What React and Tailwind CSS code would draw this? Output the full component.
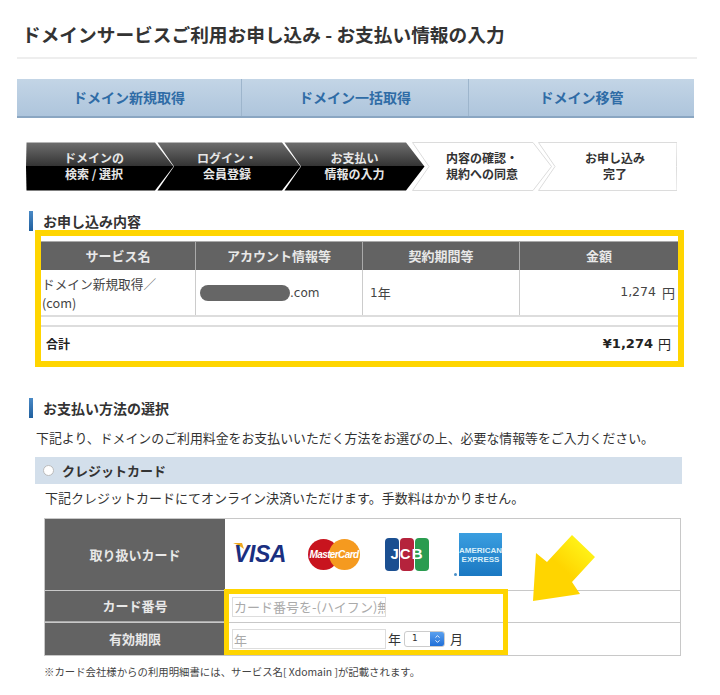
import { ChevronDown, ChevronUp } from "lucide-react";

const steps = [
  { lines: ["ドメインの", "検索 / 選択"], w: 148, dark: true, first: true, gap: "", pad: "pr-[12px]" },
  { lines: ["ログイン・", "会員登録"], w: 144, dark: true, gap: "-ml-[17px]", pad: "pr-[4px]" },
  { lines: ["お支払い", "情報の入力"], w: 141, dark: true, gap: "-ml-[17px]", pad: "" },
  { lines: ["内容の確認・", "規約への同意"], w: 140, gap: "-ml-[13px]", pad: "" },
  { lines: ["お申し込み", "完了"], w: 139, last: true, gap: "-ml-[14px]", pad: "pl-[15px]" },
];

function Step({ step, index }) {
  const { w, dark, first, last, lines, gap, pad } = step;
  const h = 49;
  const notch = first ? 0 : 17;
  const tip = last ? 0 : 19;
  const points = `0.5,0.5 ${w - tip},0.5 ${w - 0.5},${h / 2} ${w - tip},${h - 0.5} 0.5,${h - 0.5} ${notch},${h / 2}`;
  return (
    <div className={`relative h-[49px] shrink-0 ${gap}`} style={{ width: w }}>
      <svg className="absolute inset-0" width={w} height={h}>
        <defs>
          <linearGradient id={`step${index}`} x1="0" y1="0" x2="0" y2="1">
            <stop offset="0" stopColor="#6e6e6e" />
            <stop offset="0.5" stopColor="#333333" />
            <stop offset="0.5" stopColor="#000000" />
            <stop offset="1" stopColor="#000000" />
          </linearGradient>
        </defs>
        <polygon
          points={points}
          fill={dark ? `url(#step${index})` : "#ffffff"}
          stroke={dark ? "none" : "#dcdcdc"}
          strokeWidth="1"
        />
      </svg>
      <div
        className={`relative flex h-full flex-col items-center justify-center pb-[2px] text-[12px] font-bold leading-[16px] ${
          dark ? "text-[#e6e6e6]" : "text-[#333]"
        } ${pad}`}
      >
        {lines.map((l) => (
          <span key={l}>{l}</span>
        ))}
      </div>
    </div>
  );
}

function Heading({ children, className }) {
  return (
    <div className={`ml-[29px] flex h-[20px] items-center ${className}`}>
      <div className="h-full w-[4px] bg-gradient-to-b from-[#4a8ac6] to-[#1f5f9e]" />
      <h2 className="ml-[10px] text-[14px] font-bold text-[#333]">{children}</h2>
    </div>
  );
}

function CardLogos() {
  return (
    <div className="flex h-full items-center pl-[9px]">
      <div className="relative w-[53px]">
        <svg className="absolute -left-[1px] -top-[1px]" width="12" height="8">
          <polygon points="0,1 9,1 11,7 5,3" fill="#f0a820" />
        </svg>
        <span className="relative block font-['Liberation_Sans',sans-serif] text-[23px] font-bold italic leading-none tracking-[-0.4px] text-[#1a2f80]">
          VISA
        </span>
      </div>
      <div className="relative ml-[21px] h-[31px] w-[52px]">
        <div className="absolute left-0 top-0 h-[31px] w-[31px] rounded-full bg-[#c8141e]" />
        <div className="absolute right-0 top-0 h-[31px] w-[31px] rounded-full bg-[#f59a1f]" />
        <span className="absolute inset-0 flex items-center justify-center font-['Liberation_Sans',sans-serif] text-[10px] font-bold italic tracking-[-0.6px] text-white">
          MasterCard
        </span>
      </div>
      <div className="relative ml-[25px] flex h-[33px] w-[44px] gap-[1px]">
        <div className="flex-1 rounded-[4px] bg-[#1b4f91]" />
        <div className="flex-1 rounded-[4px] bg-[#b5233c]" />
        <div className="flex-1 rounded-[4px] bg-[#2a9c50]" />
        <span className="absolute inset-0 flex items-center justify-center font-['Liberation_Sans',sans-serif] text-[15px] font-bold tracking-[1px] text-white">
          JCB
        </span>
      </div>
      <div className="relative ml-[30px] flex h-[43px] w-[43px] flex-col items-center justify-center bg-gradient-to-b from-[#3a9ee0] to-[#1a78c2] font-['Liberation_Sans',sans-serif] text-[8px] font-bold leading-[9px] text-[#d8effa]">
        <span>AMERICAN</span>
        <span>EXPRESS</span>
        <div className="absolute -left-[5px] bottom-0 h-[3px] w-[3px] rounded-full bg-[#4a90c8]" />
      </div>
    </div>
  );
}

export default function App() {
  return (
    <div className="relative h-[695px] w-[720px] overflow-hidden bg-white font-['Noto_Sans_CJK_JP',sans-serif] text-[#333]">
      <div className="ml-[17px] h-[59px] w-[680px] border-b-2 border-[#eeeeee] pl-[5px] pt-[21px]">
        <h1 className="whitespace-nowrap text-[18.7px] font-bold leading-[26px] text-[#333]">
          ドメインサービスご利用お申し込み - お支払い情報の入力
        </h1>
      </div>

      <div className="ml-[17px] mt-[20px] flex h-[39px] w-[677px] border-b-2 border-[#8aa6c2] bg-gradient-to-b from-[#c3d5e6] to-[#aec5dc] text-[14px] font-bold text-[#2f6ca6]">
        <div className="flex w-[225px] items-center justify-center border-r border-[#9db5cc]">ドメイン新規取得</div>
        <div className="flex w-[227px] items-center justify-center border-r border-[#9db5cc]">ドメイン一括取得</div>
        <div className="flex flex-1 items-center justify-center">ドメイン移管</div>
      </div>

      <div className="ml-[26px] mt-[24px] flex">
        {steps.map((s, i) => (
          <Step key={i} step={s} index={i} />
        ))}
      </div>

      <Heading className="mt-[20px]">お申し込み内容</Heading>

      <div className="-mt-px ml-[35px] h-[137px] w-[649px] border-[6px] border-[#ffd500] bg-white pt-[5px] text-[13px]">
        <div className="flex h-[29px] border-t border-[#aaa] bg-[#636363] text-[13px] font-bold text-[#e8e8e8]">
          <div className="flex w-[155px] items-center justify-center border-r border-[#aaa]">サービス名</div>
          <div className="flex w-[167px] items-center justify-center border-r border-[#aaa]">アカウント情報等</div>
          <div className="flex w-[157px] items-center justify-center border-r border-[#aaa]">契約期間等</div>
          <div className="flex flex-1 items-center justify-center">金額</div>
        </div>
        <div className="flex h-[47px] border-b-2 border-[#ddd] text-[#444]">
          <div className="flex w-[155px] flex-col justify-center border-r border-[#ccc] pl-[1px] text-[12.7px] leading-[19px]">
            <span>ドメイン新規取得／</span>
            <span>(com)</span>
          </div>
          <div className="flex w-[167px] items-center border-r border-[#ccc] pl-[4px]">
            <div className="h-[16px] w-[90px] rounded-full bg-[#666]" />
            <span className="font-['DejaVu_Sans',sans-serif] text-[12px]">.com</span>
          </div>
          <div className="flex w-[157px] items-center border-r border-[#ccc] pl-[7px]">
            <span className="font-['DejaVu_Sans',sans-serif] text-[12px]">1</span>年
          </div>
          <div className="flex flex-1 items-center justify-end pr-[3px]">
            <span className="font-['DejaVu_Sans',sans-serif] text-[12.5px]">1,274</span>
            <span className="ml-[6px]">円</span>
          </div>
        </div>
        <div className="mt-[8px] flex h-[36px] items-center justify-between border-t-2 border-[#ddd] pl-[5px] pr-[7px] font-bold text-[#222]">
          <span className="text-[12px]">合計</span>
          <span className="flex items-center">
            <span className="font-['DejaVu_Sans',sans-serif] text-[13px]">¥1,274</span>
            <span className="ml-[5px] text-[13px] font-normal">円</span>
          </span>
        </div>
      </div>

      <Heading className="mt-[31px]">お支払い方法の選択</Heading>

      <p className="ml-[36px] mt-[11px] h-[18px] whitespace-nowrap text-[12.9px] leading-[18px] text-[#333]">
        下記より、ドメインのご利用料金をお支払いいただく方法をお選びの上、必要な情報等をご入力ください。
      </p>

      <div className="ml-[35px] mt-[10px] flex h-[27px] w-[647px] items-center bg-[#d3dfeb] pl-[8px]">
        <div className="h-[11px] w-[11px] rounded-full border border-[#bbb] bg-white" />
        <span className="ml-[8px] text-[13px] font-bold text-[#333]">クレジットカード</span>
      </div>

      <p className="ml-[45px] mt-[5px] h-[18px] whitespace-nowrap text-[13px] leading-[18px] text-[#333]">
        下記クレジットカードにてオンライン決済いただけます。手数料はかかりません。
      </p>

      <div className="relative ml-[44px] mt-[11px] w-[637px] border border-[#c8c8c8] text-[13px]">
        <div className="flex h-[72px] border-b border-[#c8c8c8]">
          <div className="flex w-[180px] items-center justify-center bg-[#636363] font-bold text-[#e8e8e8]">取り扱いカード</div>
          <div className="flex-1">
            <CardLogos />
          </div>
        </div>
        <div className="flex h-[32px] border-b border-[#c8c8c8]">
          <div className="flex w-[180px] items-center justify-center border-b border-[#aaa] bg-[#636363] font-bold text-[#e8e8e8]">カード番号</div>
          <div className="flex flex-1 items-center pl-[7px]">
            <input
              readOnly
              placeholder="カード番号を-(ハイフン)無"
              className="h-[20px] w-[154px] border border-[#ddd] bg-white pl-[1px] text-[13px] outline-none placeholder:text-[#aaa]"
            />
          </div>
        </div>
        <div className="flex h-[32px]">
          <div className="flex w-[180px] items-center justify-center bg-[#636363] font-bold text-[#e8e8e8]">有効期限</div>
          <div className="flex flex-1 items-center pl-[7px] text-[#333]">
            <input
              readOnly
              placeholder="年"
              className="h-[20px] w-[154px] border border-[#ddd] bg-white pl-[1px] text-[13px] outline-none placeholder:text-[#aaa]"
            />
            <span className="ml-[2px]">年</span>
            <div className="ml-[3px] flex h-[16px] w-[41px] items-center overflow-hidden rounded-[3px] border border-[#ccc] bg-white">
              <span className="flex-1 pl-[7px] font-['DejaVu_Sans',sans-serif] text-[9px]">1</span>
              <div className="flex h-full w-[14px] flex-col items-center justify-center bg-gradient-to-b from-[#5aa0ee] to-[#1f6fd8] text-white">
                <ChevronUp size={7} strokeWidth={3} className="-mb-[1px]" />
                <ChevronDown size={7} strokeWidth={3} className="-mt-[1px]" />
              </div>
            </div>
            <span className="ml-[5px]">月</span>
          </div>
        </div>
        {/* highlight box */}
        <div className="absolute left-[179px] top-[70px] h-[66px] w-[284px] border-[5px] border-[#ffd500]" />
      </div>

      <p className="ml-[44px] mt-[9px] text-[10.4px] leading-[14px] text-[#444]">
        ※カード会社様からの利用明細書には、サービス名[ Xdomain ]が記載されます。
      </p>

      <svg className="absolute left-[530px] top-[532px]" width="68" height="72" viewBox="530 532 68 72">
        <defs>
          <linearGradient id="arrow" x1="1" y1="0" x2="0.2" y2="0.9">
            <stop offset="0" stopColor="#ffff22" />
            <stop offset="0.6" stopColor="#ffd500" />
            <stop offset="1" stopColor="#ffd500" />
          </linearGradient>
        </defs>
        <polygon points="533,601 536,553 547,562 572,535 595,557 572,582 580,594" fill="url(#arrow)" />
      </svg>
    </div>
  );
}
